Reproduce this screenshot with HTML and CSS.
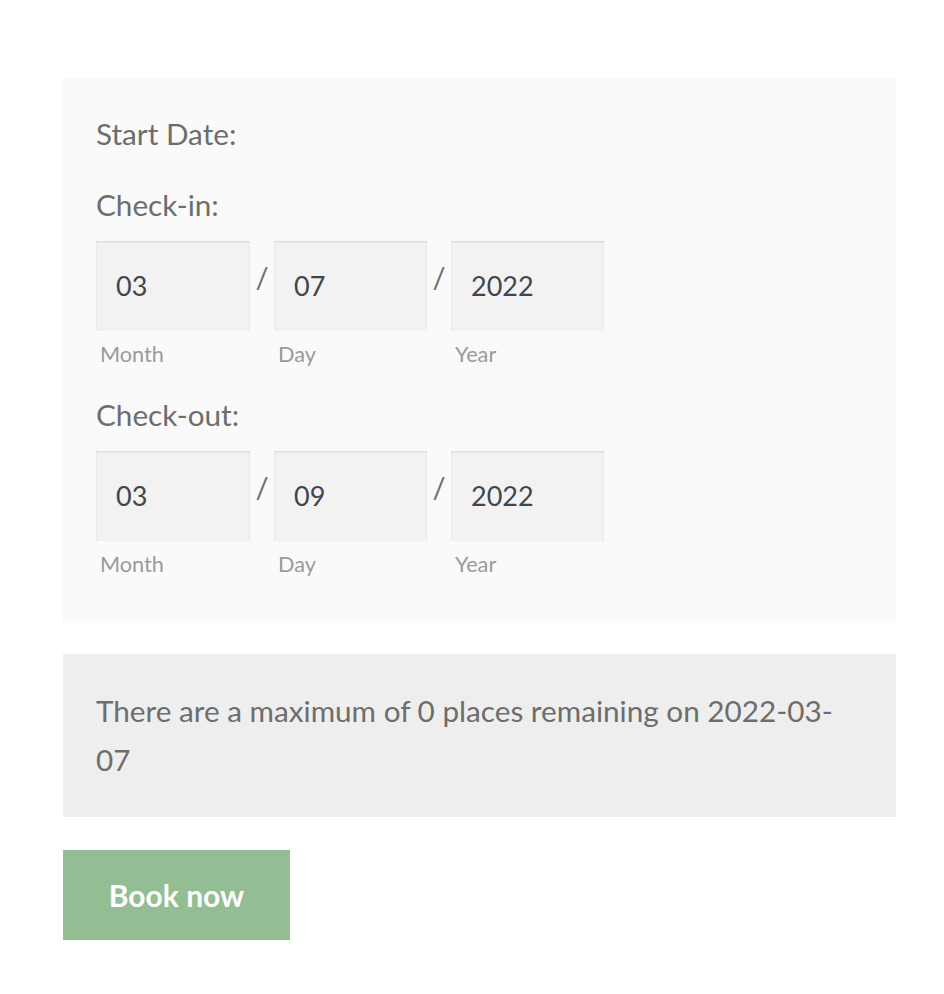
FILE: index.html
```html
<!DOCTYPE html>
<html>
<head>
<meta charset="utf-8">
<link rel="stylesheet" href="styles.css">
</head>
<body>
<div class="page">
  <form class="panel">
    <div class="heading">Start Date:</div>
    <div class="field">
      <div class="label">Check-in:</div>
      <div class="date-row">
        <div class="part">
          <div class="input wide">03</div>
          <div class="sub">Month</div>
        </div>
        <span class="sep">/</span>
        <div class="part">
          <div class="input">07</div>
          <div class="sub">Day</div>
        </div>
        <span class="sep">/</span>
        <div class="part">
          <div class="input">2022</div>
          <div class="sub">Year</div>
        </div>
      </div>
    </div>
    <div class="field">
      <div class="label">Check-out:</div>
      <div class="date-row">
        <div class="part">
          <div class="input wide">03</div>
          <div class="sub">Month</div>
        </div>
        <span class="sep">/</span>
        <div class="part">
          <div class="input">09</div>
          <div class="sub">Day</div>
        </div>
        <span class="sep">/</span>
        <div class="part">
          <div class="input">2022</div>
          <div class="sub">Year</div>
        </div>
      </div>
    </div>
  </form>
  <div class="notice">There are a maximum of 0 places remaining on 2022-03-<wbr>07</div>
  <button class="book">Book now</button>
</div>
</body>
</html>
```
FILE: styles.css
```css
html, body {
  margin: 0;
  padding: 0;
  background: #ffffff;
}
body {
  font-family: "Lato", "Source Sans Pro", "Noto Sans", sans-serif;
  color: #6d6d6d;
}
.page {
  padding: 78px 48px 0 63px;
  display: flex;
  flex-direction: column;
  align-items: flex-start;
}
.panel {
  width: 833px;
  box-sizing: border-box;
  background: #fafafa;
  padding: 36px 33px 46px 33px;
  margin: 0;
  display: flex;
  flex-direction: column;
}
.heading, .label {
  font-size: 29.7px;
  line-height: 40px;
}
.field {
  margin-top: 31px;
}
.field + .field {
  margin-top: 28px;
}
.date-row {
  margin-top: 16px;
  display: flex;
  align-items: flex-start;
}
.part {
  display: flex;
  flex-direction: column;
}
.input {
  width: 153px;
  height: 90px;
  box-sizing: border-box;
  background: #f2f2f2;
  box-shadow: inset 0 1px 2px rgba(0,0,0,0.12);
  padding-left: 20px;
  font-size: 27px;
  line-height: 90px;
  color: #43454b;
}
.input.wide {
  width: 154px;
}
.sep {
  width: 24px;
  text-align: center;
  font-size: 29px;
  line-height: 29px;
  padding-top: 21px;
  color: #6d6d6d;
}
.sub {
  font-size: 21.7px;
  line-height: 26px;
  margin-top: 10px;
  padding-left: 4px;
  color: #9a9a9a;
}
.notice {
  width: 833px;
  box-sizing: border-box;
  margin-top: 31px;
  background: #eeeeee;
  padding: 32px 33px 33px 33px;
  font-size: 29.7px;
  line-height: 49px;
}
.book {
  margin-top: 33px;
  width: 227px;
  height: 90px;
  border: none;
  background: #93bd93;
  color: #ffffff;
  font-family: inherit;
  font-weight: 700;
  font-size: 30px;
  padding: 0;
  cursor: pointer;
}
```
